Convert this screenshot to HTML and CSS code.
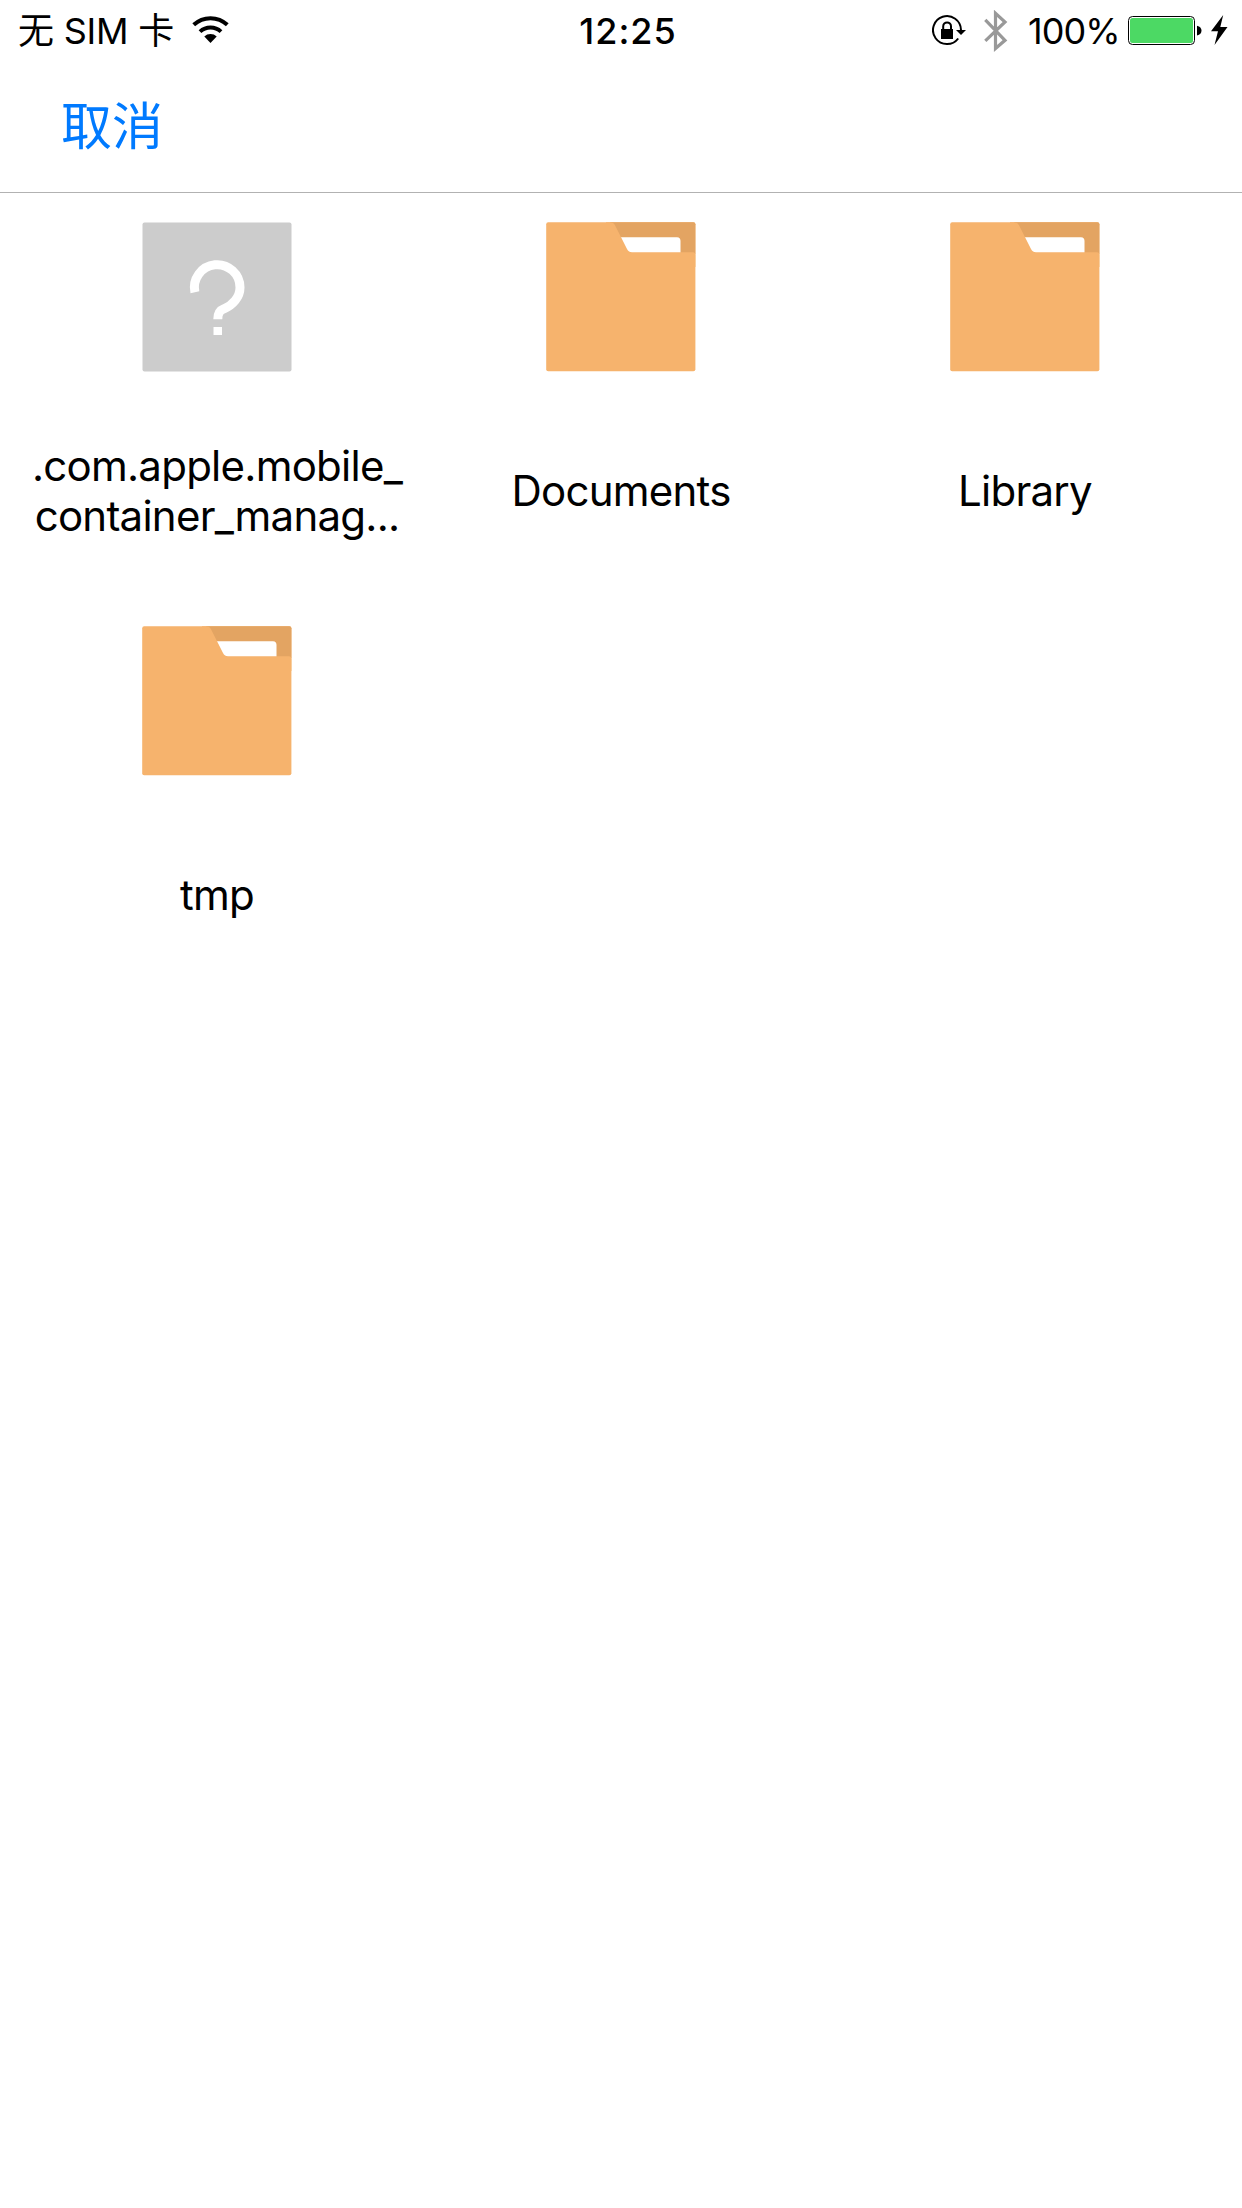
FILE: index.html
```html
<!DOCTYPE html>
<html lang="zh-CN">
<head>
<meta charset="utf-8">
<title>文件</title>
<link rel="stylesheet" href="styles.css">
</head>
<body>
<svg class="defs" width="0" height="0" aria-hidden="true">
  <symbol id="folder" viewBox="0 0 150 150">
    <rect x="0.2" y="0.2" width="149.200" height="149" rx="2" fill="#f6b36d"/>
    <path d="M64 .2H147.400q2 0 2 2V32H85z" fill="#e3a462"/>
    <path d="M70 15.200H131q3.500 0 3.500 3.800V31H80z" fill="#fff"/>
    <path d="M60 .2H64.500q3 0 4.500 3L81 27q1.700 3.300 5 3.300H147q2.400 0 2.400 2.700V45H60z" fill="#f6b36d"/>
  </symbol>
</svg>
<header class="header">
  <div class="status">
    <div class="carrier">
      <span>无 SIM 卡</span>
      <svg class="wifi" width="37" height="27" viewBox="0 0 37 27">
        <path d="M1.700 8.800A24.500 24.500 0 0 1 35.300 8.800M8 15.600A15.500 15.500 0 0 1 29 15.600" fill="none" stroke="#000" stroke-width="4"/>
        <path d="M18.500 27L12.300 20.500A9 9 0 0 1 24.700 20.500z"/>
      </svg>
    </div>
    <time class="clock">12:25</time>
    <div class="indicators">
      <svg class="lock" width="35" height="32" viewBox="0 0 35 32">
        <path d="M26.200 23.500A14 14 0 1 1 29 15" fill="none" stroke="#000" stroke-width="2"/>
        <path d="M24 15H34L29 20z"/>
        <path d="M9 14H21V24H9z"/>
        <path d="M11.200 14V11.300a3.900 3.900 0 0 1 7.800 0V14" fill="none" stroke="#000" stroke-width="2"/>
      </svg>
      <svg class="bluetooth" width="24" height="42" viewBox="0 0 24 42">
        <path d="M1.300 9.800L21 30.300L11.500 38.500V3.300L21 12L1.300 30.800" fill="none" stroke="#999" stroke-width="3.200"/>
      </svg>
      <span class="percent">100%</span>
      <svg class="battery" width="74" height="30" viewBox="0 0 74 30">
        <rect x=".5" y=".5" width="66" height="28" rx="4" fill="#fff" stroke="#000"/>
        <rect x="2" y="2" width="63" height="25" rx="2.500" fill="#4cd964"/>
        <path d="M69 9.700q4.500 1 4.500 4.900t-4.500 4.900z"/>
      </svg>
      <svg class="bolt" width="17" height="30" viewBox="0 0 17 30">
        <path d="M12.200 0L0 16.300H7L3.500 30L16.500 12H9.300z"/>
      </svg>
    </div>
  </div>
  <nav class="nav"><a class="cancel">取消</a></nav>
</header>
<main class="files">
  <div class="file">
    <svg class="icon" width="150" height="150" viewBox="0 0 150 150">
      <rect x=".5" y=".5" width="149" height="149" rx="2" fill="#ccc"/>
      <path d="M52.900 70.200A22.800 22.800 0 1 1 98 65.500C98 75 91 83 82 86.800C77.500 88.500 75.800 91.500 75.800 97.300" fill="none" stroke="#fff" stroke-width="9"/>
      <path d="M71.500 105h8.500v8h-8.500z" fill="#fff"/>
    </svg>
    <div class="name">.com.apple.mobile_<br>container_manag...</div>
  </div>
  <div class="file">
    <svg class="icon" width="150" height="150"><use href="#folder"/></svg>
    <div class="name">Documents</div>
  </div>
  <div class="file">
    <svg class="icon" width="150" height="150"><use href="#folder"/></svg>
    <div class="name">Library</div>
  </div>
  <div class="file">
    <svg class="icon" width="150" height="150"><use href="#folder"/></svg>
    <div class="name">tmp</div>
  </div>
</main>
</body>
</html>
```
FILE: styles.css
```css
* { box-sizing: border-box; }

body {
  margin: 0;
  min-height: 2208px;
  background: #fff;
  color: #000;
  font-family: Inter, "Noto Sans CJK SC", sans-serif;
}

svg { display: block; flex: none; }
.defs { position: absolute; }

.header {
  height: 193px;
  border-bottom: 1px solid #b2b2b2;
}

.status {
  display: grid;
  grid-template-columns: 563px 130px 1fr;
  height: 62px;
  padding-right: 14px;
  font-size: 36px;
  line-height: 62px;
  white-space: nowrap;
}

.carrier { display: flex; padding-left: 18px; }
.carrier span { width: 174px; letter-spacing: -0.2px; }
.wifi { margin-top: 16px; }

.clock {
  text-align: center;
  font-weight: 550;
  letter-spacing: 1px;
}

.indicators { display: flex; justify-content: flex-end; }
.lock { margin: 15px 17px 0 0; }
.bluetooth { margin: 10px 20px 0 0; }
.percent { width: 100px; letter-spacing: -0.9px; }
.battery { margin: 16px 9px 0 0; }
.bolt { margin-top: 15px; }

.nav { padding-left: 61px; }
.cancel {
  display: block;
  color: #007aff;
  font-size: 51px;
  line-height: 129px;
}

.files {
  display: grid;
  grid-template-columns: repeat(3, 404px);
  grid-auto-rows: 404px;
  padding: 29px 15px 0;
}

.file { display: flex; flex-direction: column; align-items: center; }

.name {
  display: flex;
  align-items: center;
  height: 100px;
  margin-top: 69px;
  font-size: 42px;
  letter-spacing: -0.75px;
  line-height: 50px;
  text-align: center;
  white-space: nowrap;
}
```
